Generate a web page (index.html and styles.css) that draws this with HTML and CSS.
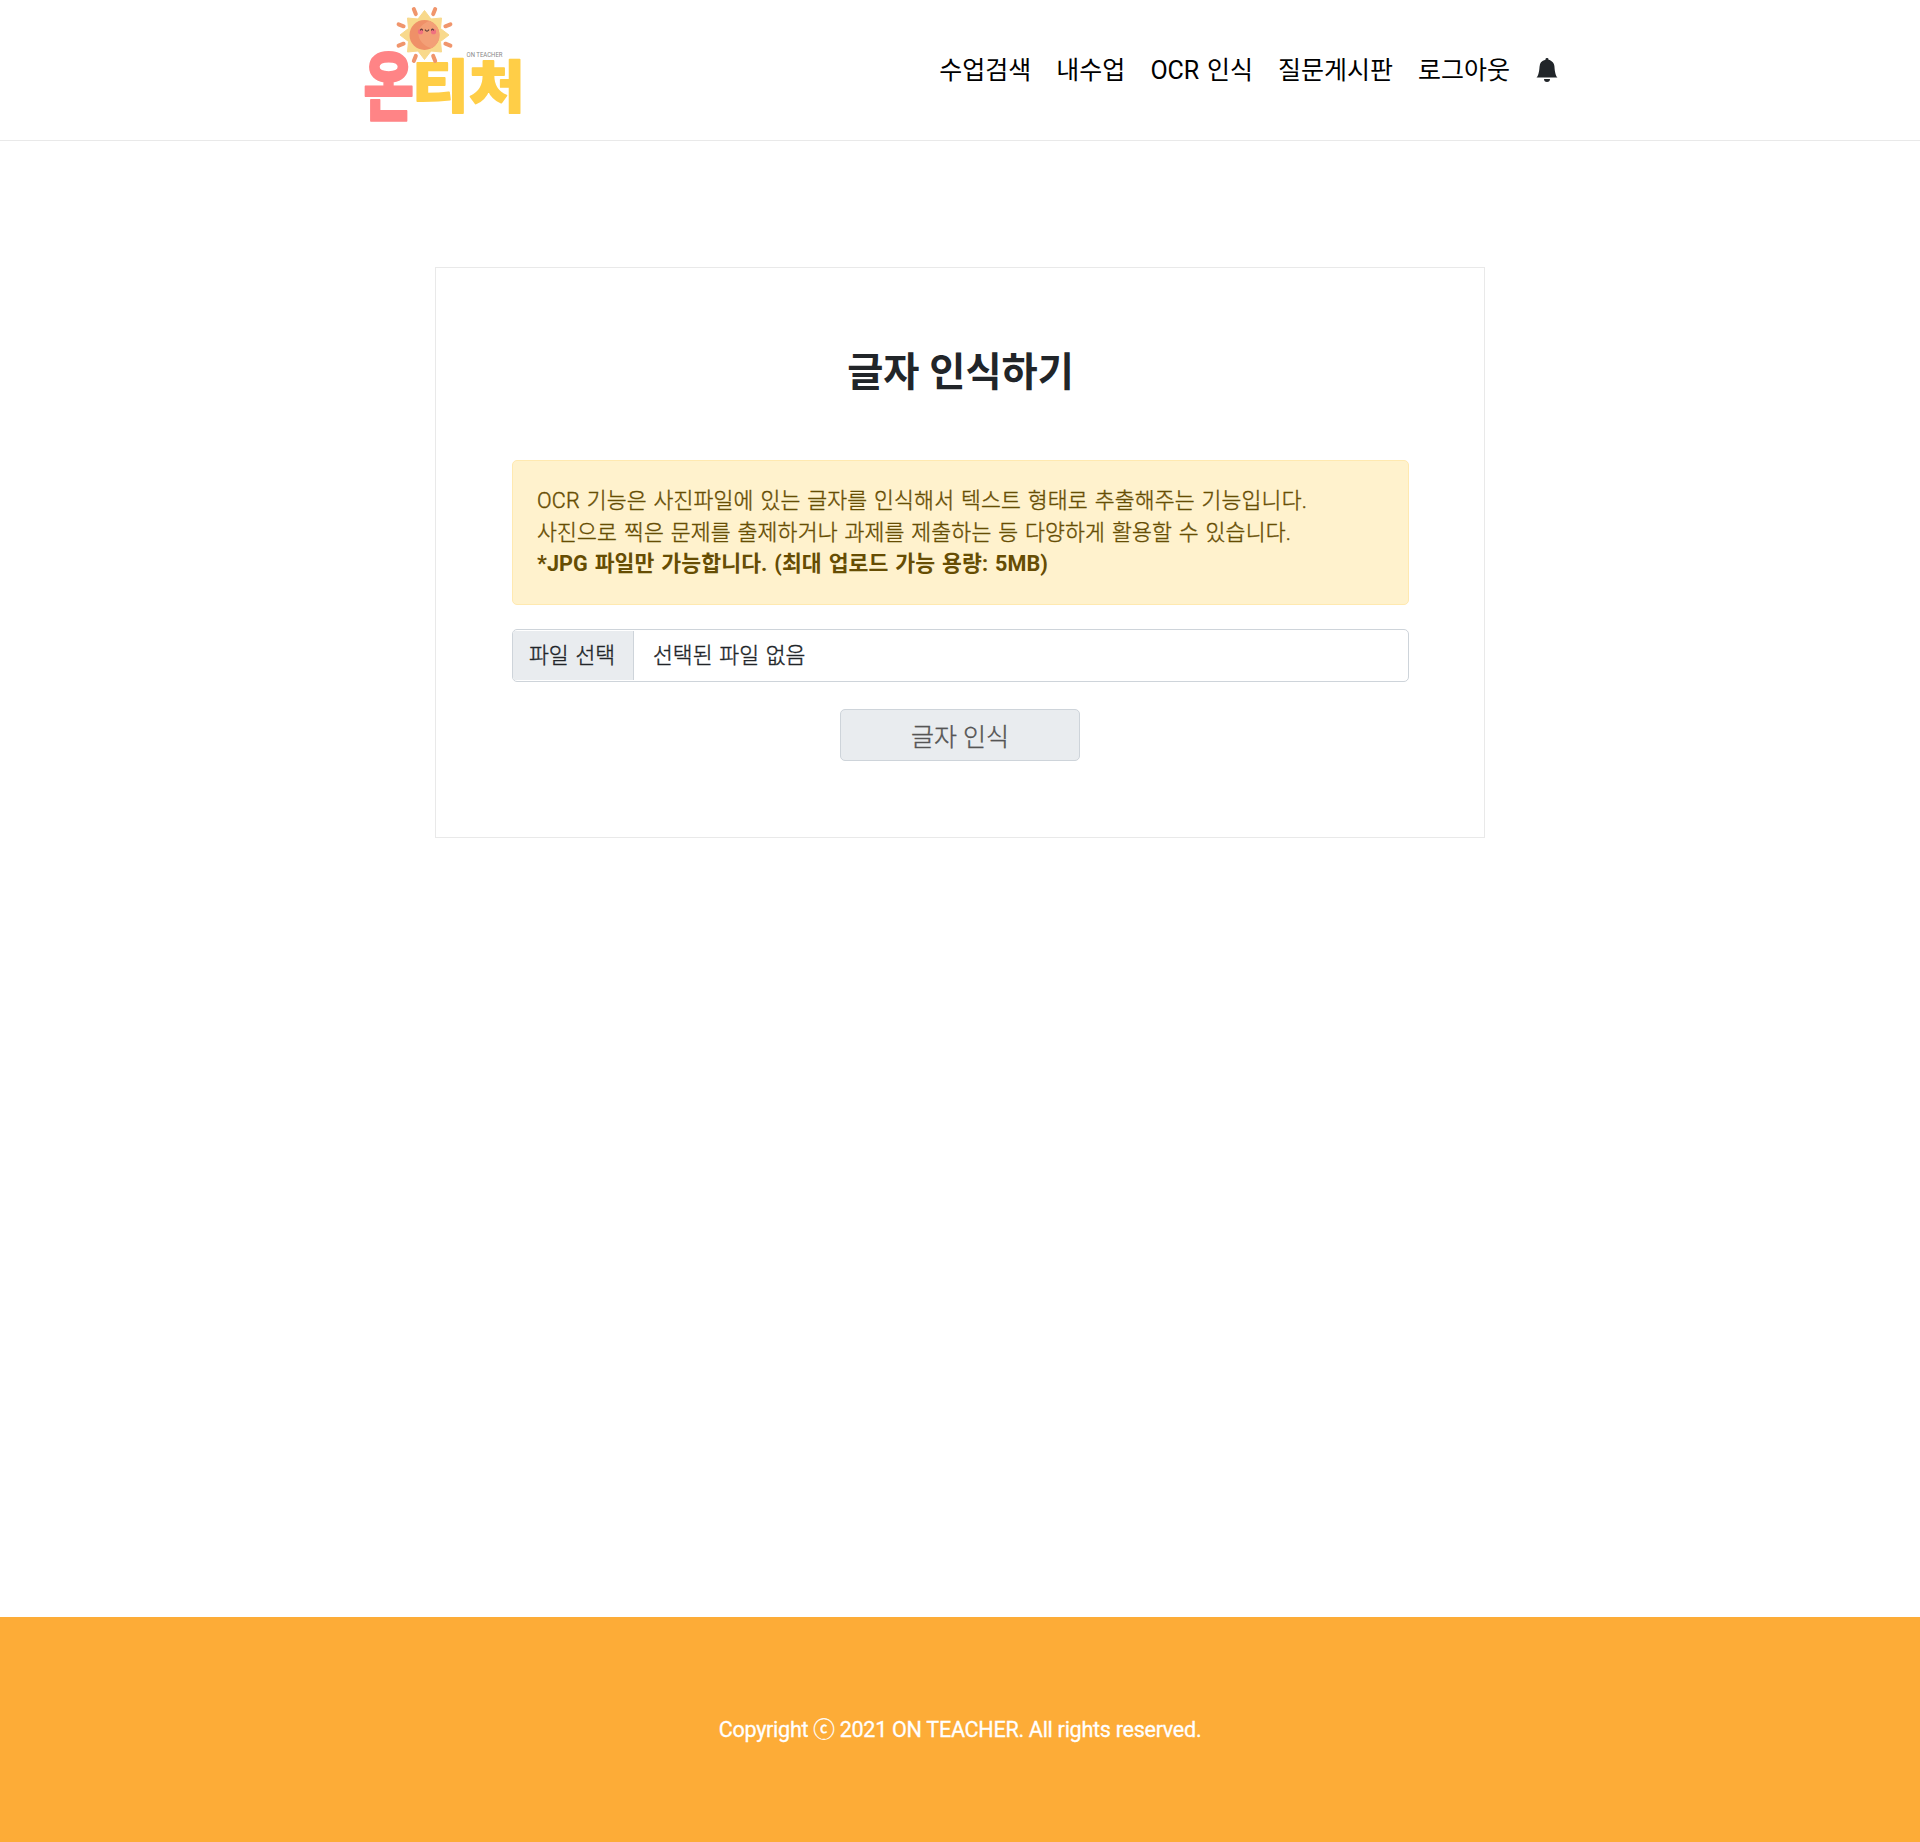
FILE: index.html
```html
<!DOCTYPE html>
<html lang="ko">
<head>
<meta charset="utf-8">
<title>온티처</title>
<link rel="stylesheet" href="styles.css">
</head>
<body>
<header class="header">
  <div class="header-inner">
    <a class="logo" aria-label="온티처">
      <svg width="190" height="140" viewBox="0 0 190 140">
        <text class="mark mark-pink" transform="translate(13.5 114) scale(.72 .99)" font-size="76">온</text>
        <text class="mark mark-yellow" transform="translate(62.5 106.5) scale(.97 .9)" font-size="63">티</text>
        <text class="mark mark-yellow" transform="translate(119 106.5) scale(.95 .87)" font-size="64">처</text>
        <text class="mark-sub" x="116.5" y="56.8" textLength="36" lengthAdjust="spacingAndGlyphs">ON TEACHER</text>
        <g class="sun" transform="translate(74.5 35)">
          <path class="rays" d="M-8.7-20.9l-2-5M8.7-20.9l2-5M-20.9-8.7l-5-2M20.9-8.7l5-2M-20.9 8.7l-5 2M20.9 8.7l5 2M-8.7 20.9l-2 5M8.7 20.9l2 5"/>
          <path class="corona" d="M0-24.5 6.5-16 17-17 16-6.5 24.5 0 16 6.5 17 17 6.5 16 0 24.5-6.5 16-17 17-16 6.5-24.5 0-16-6.5-17-17-6.5-16Z"/>
          <circle class="disc" r="15"/>
          <path class="shine" d="M5-14A15 15 0 0 1 7 13.3C-1 11-6 5-6-1-6-8-1-12 5-14Z"/>
          <circle class="cheek" cx="-4" cy="-3.3" r="2.6"/>
          <circle class="cheek" cx="9" cy="-3.3" r="2.6"/>
          <path class="face" d="M-4-5q1-1.6 2 0M7-5q1-1.6 2 0M.8-5q1.7 2.4 3.4 0"/>
        </g>
      </svg>
    </a>
    <nav class="nav">
      <a>수업검색</a>
      <a>내수업</a>
      <a>OCR 인식</a>
      <a>질문게시판</a>
      <a>로그아웃</a>
      <svg class="bell" width="24" height="24" viewBox="0 0 16 16"><path d="M8 16a2 2 0 0 0 2-2H6a2 2 0 0 0 2 2zm.995-14.901a1 1 0 1 0-1.99 0A5.002 5.002 0 0 0 3 6c0 1.098-.5 6-2 7h14c-1.5-1-2-5.902-2-7 0-2.42-1.72-4.44-4.005-4.901z"/></svg>
    </nav>
  </div>
</header>
<main class="main">
  <section class="card">
    <h1 class="title">글자 인식하기</h1>
    <div class="alert">
      <p>OCR 기능은 사진파일에 있는 글자를 인식해서 텍스트 형태로 추출해주는 기능입니다.</p>
      <p>사진으로 찍은 문제를 출제하거나 과제를 제출하는 등 다양하게 활용할 수 있습니다.</p>
      <p class="strong">*JPG 파일만 가능합니다. (최대 업로드 가능 용량: 5MB)</p>
    </div>
    <div class="file">
      <span class="file-button">파일 선택</span>
      <span class="file-name">선택된 파일 없음</span>
    </div>
    <button class="submit" disabled>글자 인식</button>
  </section>
</main>
<footer class="footer"><p>Copyright ⓒ 2021 ON TEACHER. All rights reserved.</p></footer>
</body>
</html>
```
FILE: styles.css
```css
* { box-sizing: border-box; }

body {
  margin: 0;
  min-height: 1842px;
  display: flex;
  flex-direction: column;
  background: #fff;
  color: #212529;
  font-family: Roboto, "Noto Sans CJK KR", sans-serif;
  font-size: 21.6px;
  line-height: 31.5px;
}

p, h1 { margin: 0; }

.header {
  height: 141px;
  border-bottom: 1px solid #e9e9e9;
}

.header-inner {
  width: 1220px;
  margin: 0 auto;
  height: 140px;
  display: flex;
  justify-content: space-between;
}

.logo svg { display: block; }

.rays { fill: none; stroke: #f0956c; stroke-width: 4; stroke-linecap: round; }
.corona { fill: #f8d98c; stroke: #f8d98c; stroke-linejoin: round; }
.disc { fill: #ef9068; }
.shine { fill: #f3a077; }
.cheek { fill: #f0717f; }
.face { fill: none; stroke: #5b3a3a; stroke-width: 1.2; stroke-linecap: round; }

.mark { font-family: "Noto Sans CJK KR", sans-serif; font-weight: 900; stroke-width: 2; stroke-linejoin: round; }
.mark-pink { fill: #ff8486; stroke: #ff8486; }
.mark-yellow { fill: #ffce47; stroke: #ffce47; }
.mark-sub { font-family: Roboto, sans-serif; font-size: 7.5px; fill: #888; }

.nav {
  display: flex;
  align-items: center;
  gap: 25px;
  padding-right: 11px;
  color: #000;
  font-size: 25px;
  word-spacing: 1.5px;
}
.nav a {
  padding-top: 2px;
  white-space: nowrap;
}
.bell { fill: #212529; }

.main { flex: 1; padding-top: 126px; }

.card {
  width: 1050px;
  height: 571px;
  margin: 0 auto;
  padding: 76px 75px 0 76px;
  border: 1px solid #e9e9e9;
  display: flex;
  flex-direction: column;
  align-items: center;
}

.title {
  font-size: 39.3px;
  line-height: 58px;
  font-weight: 700;
}

.alert {
  align-self: stretch;
  height: 145px;
  margin-top: 58px;
  padding: 24px 24px 0;
  border: 1px solid #ffe9b0;
  border-radius: 5px;
  background: #fff2cd;
  color: #664d03;
  font-weight: 300;
  -webkit-text-stroke: .4px;
  letter-spacing: .15px;
  word-spacing: 1.4px;
  white-space: nowrap;
}
.strong {
  font-weight: 700;
  letter-spacing: .08px;
  -webkit-text-stroke: 0;
}

.file {
  align-self: stretch;
  height: 53px;
  margin-top: 24px;
  border: 1px solid #ced4da;
  border-radius: 5px;
  display: flex;
  align-items: center;
  font-weight: 300;
  -webkit-text-stroke: .4px;
  word-spacing: 1.4px;
  overflow: hidden;
  background: #fff;
}
.file-button {
  width: 121px;
  height: 49px;
  padding-left: 16px;
  line-height: 50px;
  background: #e9ecef;
  border-right: 1px solid #ced4da;
}
.file-name { padding: 1px 0 0 19px; }

.submit {
  width: 240px;
  height: 52px;
  margin: 27px 1px 0 0;
  padding: 0;
  border: 1px solid #ced4da;
  border-radius: 5px;
  background: #e9ecef;
  color: #555;
  font: 300 25px Roboto, "Noto Sans CJK KR", sans-serif;
  -webkit-text-stroke: .4px;
}

.footer {
  height: 225px;
  background: #fdac37;
  color: #fff;
  text-align: center;
  padding-top: 97px;
  letter-spacing: -.3px;
  -webkit-text-stroke: .3px;
}
```
